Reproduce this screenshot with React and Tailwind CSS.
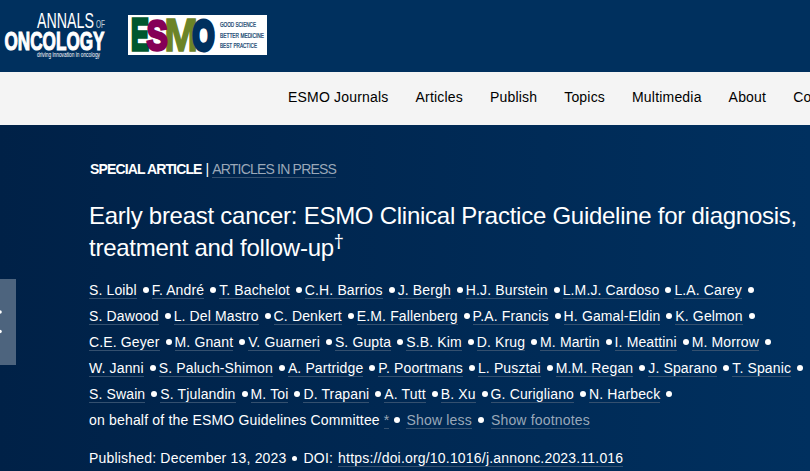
import React from "react";

const navItems = ["ESMO Journals", "Articles", "Publish", "Topics", "Multimedia", "About", "Collections"];

const authorRows = [
  ["S. Loibl", "F. André", "T. Bachelot", "C.H. Barrios", "J. Bergh", "H.J. Burstein", "L.M.J. Cardoso", "L.A. Carey"],
  ["S. Dawood", "L. Del Mastro", "C. Denkert", "E.M. Fallenberg", "P.A. Francis", "H. Gamal-Eldin", "K. Gelmon"],
  ["C.E. Geyer", "M. Gnant", "V. Guarneri", "S. Gupta", "S.B. Kim", "D. Krug", "M. Martin", "I. Meattini", "M. Morrow"],
  ["W. Janni", "S. Paluch-Shimon", "A. Partridge", "P. Poortmans", "L. Pusztai", "M.M. Regan", "J. Sparano", "T. Spanic"],
  ["S. Swain", "S. Tjulandin", "M. Toi", "D. Trapani", "A. Tutt", "B. Xu", "G. Curigliano", "N. Harbeck"],
];

function AnnalsLogo() {
  return (
    <svg className="h-[52px] w-[110px] overflow-visible" viewBox="0 0 110 52" fill="#fff" fontFamily="'Liberation Sans', Arial, sans-serif">
      <text x="37" y="19" fontSize="21.5" textLength="57" lengthAdjust="spacingAndGlyphs">ANNALS</text>
      <text x="96" y="19" fontSize="11" textLength="9" lengthAdjust="spacingAndGlyphs" opacity="0.75">OF</text>
      <text x="4.5" y="40.5" fontSize="26" fontWeight="700" stroke="#fff" strokeWidth="1.1" textLength="100" lengthAdjust="spacingAndGlyphs">ONCOLOGY</text>
      <text x="37" y="47.5" fontSize="6.5" textLength="63" lengthAdjust="spacingAndGlyphs">driving innovation in oncology</text>
    </svg>
  );
}

function EsmoLogo() {
  return (
    <svg className="h-10 w-[139px] overflow-visible" viewBox="0 0 139 40" fontFamily="'Liberation Sans', Arial, sans-serif">
      <rect width="139" height="40" fill="#fff" />
      {/* condensed heavy letters, each one touching the next */}
      <g fontSize="44" fontWeight="700" strokeWidth="3.5">
        <text transform="translate(3 35.2) scale(0.61 1)" fill="#00572f" stroke="#00572f">E</text>
        <text transform="translate(36.2 36.2) scale(0.87 1)" fontSize="46.5" strokeWidth="1.5" fill="#6c8427" stroke="#6c8427">M</text>
        <text transform="translate(18.8 34.8) scale(0.71 0.97)" fill="#850057" stroke="#850057">S</text>
        <text transform="translate(64.8 34.8) scale(0.63 0.97)" strokeWidth="5" fill="#00305e" stroke="#00305e">O</text>
      </g>
      <g fill="#003263" stroke="#003263" strokeWidth="0.2" fontSize="6.8">
        <text x="92" y="11.8" textLength="36" lengthAdjust="spacingAndGlyphs">GOOD SCIENCE</text>
        <text x="92" y="22.6" textLength="44" lengthAdjust="spacingAndGlyphs">BETTER MEDICINE</text>
        <text x="92" y="33" textLength="37" lengthAdjust="spacingAndGlyphs">BEST PRACTICE</text>
      </g>
    </svg>
  );
}

function Dot({ className = "" }) {
  return <span className={`inline-block shrink-0 rounded-full bg-white ${className}`} />;
}

export default function App() {
  return (
    <div className="relative h-[471px] w-[810px] overflow-hidden bg-[#00305e] font-['Liberation_Sans',Arial,sans-serif] text-white">
      <header className="flex h-[72px] items-start">
        <div className="w-32 pt-[9px]">
          <AnnalsLogo />
        </div>
        <div className="pt-[15px]">
          <EsmoLogo />
        </div>
      </header>

      <nav className="flex h-[53px] items-center gap-[27px] overflow-hidden bg-[#f4f4f4] pb-[3px] pl-72 text-sm tracking-[0.19px] whitespace-nowrap text-black">
        {navItems.map((item) => (
          <a key={item} className="shrink-0">{item}</a>
        ))}
      </nav>

      <main className="h-[346px] bg-linear-to-r from-[#002147] to-[#00305f] pt-[34px] pl-[89px] text-sm whitespace-nowrap">
        <div className="flex h-5 items-center pl-px">
          <span className="font-bold tracking-[-0.86px]">SPECIAL ARTICLE</span>
          <span className="mr-[3px] ml-1">|</span>
          <a className="border-b border-[#34506f] leading-4 tracking-[-0.8px] text-[#9aa8b8]">ARTICLES IN PRESS</a>
        </div>

        <h1 className="mt-[21px] text-2xl leading-8 tracking-[-0.26px]">
          Early breast cancer: ESMO Clinical Practice Guideline for diagnosis,
          <br />
          treatment and follow-up
          <sup className="top-[-0.36em] font-['Open_Sans',sans-serif] text-[20px] leading-none">†</sup>
        </h1>

        <div className="mt-[13px] tracking-[0.13px]">
          {authorRows.map((row) => (
            <div key={row[0]} className="flex h-[26px] items-center">
              {row.map((name) => (
                <React.Fragment key={name}>
                  <a className="border-b border-[#34506f] leading-4">{name}</a>
                  <Dot className="mr-[3px] ml-1.5 size-1.5" />
                </React.Fragment>
              ))}
            </div>
          ))}
          <div className="flex h-[26px] items-center tracking-[0.18px]">
            <span>on behalf of the ESMO Guidelines Committee</span>
            <a className="ml-1 border-b border-[#34506f] leading-4 text-[#9aa8b8]">*</a>
            <Dot className="mr-1.5 ml-[5px] size-1.5" />
            <a className="border-b border-[#34506f] leading-4 text-[#9aa8b8]">Show less</a>
            <Dot className="mr-[7px] ml-1.5 size-1.5" />
            <a className="border-b border-[#34506f] leading-4 text-[#9aa8b8]">Show footnotes</a>
          </div>
        </div>

        <div className="mt-3 flex h-[26px] items-center tracking-[0.19px]">
          <span>Published: December 13, 2023</span>
          <Dot className="mr-[7px] ml-[5px] size-[5px]" />
          <span className="mr-[5px]">DOI:</span>
          <a className="border-b border-[#34506f] leading-4">https://doi.org/10.1016/j.annonc.2023.11.016</a>
        </div>
      </main>

      {/* previous article tab, cut off by the left edge */}
      <button className="absolute top-[279px] left-0 h-[86px] w-4 bg-[#4d647e]">
        <svg className="h-full w-full" viewBox="0 0 16 86" fill="#fff">
          <circle cx="0" cy="33" r="1.8" />
          <circle cx="0" cy="52.5" r="1.8" />
        </svg>
      </button>
    </div>
  );
}
